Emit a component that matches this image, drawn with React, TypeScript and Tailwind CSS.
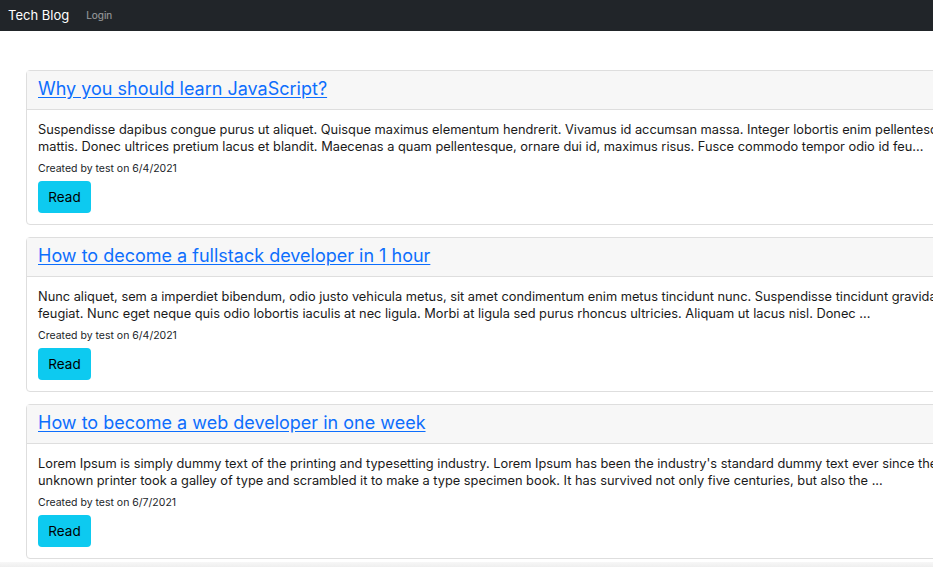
const posts = [
  {
    title: "Why you should learn JavaScript?",
    lines: [
      "Suspendisse dapibus congue purus ut aliquet. Quisque maximus elementum hendrerit. Vivamus id accumsan massa. Integer lobortis enim pellentesque nibh",
      "mattis. Donec ultrices pretium lacus et blandit. Maecenas a quam pellentesque, ornare dui id, maximus risus. Fusce commodo tempor odio id feu...",
    ],
    date: "6/4/2021",
  },
  {
    title: "How to decome a fullstack developer in 1 hour",
    lines: [
      "Nunc aliquet, sem a imperdiet bibendum, odio justo vehicula metus, sit amet condimentum enim metus tincidunt nunc. Suspendisse tincidunt gravida",
      "feugiat. Nunc eget neque quis odio lobortis iaculis at nec ligula. Morbi at ligula sed purus rhoncus ultricies. Aliquam ut lacus nisl. Donec ...",
    ],
    date: "6/4/2021",
  },
  {
    title: "How to become a web developer in one week",
    lines: [
      "Lorem Ipsum is simply dummy text of the printing and typesetting industry. Lorem Ipsum has been the industry's standard dummy text ever since the",
      "unknown printer took a galley of type and scrambled it to make a type specimen book. It has survived not only five centuries, but also the ...",
    ],
    date: "6/7/2021",
  },
];

function PostCard({ title, lines, date }: { title: string; lines: string[]; date: string }) {
  return (
    <div className="border border-[#dedede] rounded-[4px] bg-white">
      <div className="h-[39px] bg-[#f7f7f7] border-b border-[#dedede] px-[11px] flex items-center">
        <a href="#" className="-mt-[3px] text-[18px] leading-none text-[#0d6efd] underline underline-offset-2 whitespace-nowrap">
          {title}
        </a>
      </div>
      <div className="px-[11px] pt-[11px] pb-[11px]">
        <p className="text-[12.8px] leading-[17px] text-[#1a1a1a] whitespace-nowrap">
          {lines[0]}
          <br />
          {lines[1]}
        </p>
        <p className="mt-[6px] text-[10.5px] leading-[15px] text-[#212529]">Created by test on {date}</p>
        <button className="mt-[5px] h-[32px] w-[53px] rounded-[4px] bg-[#0dcaf0] text-[13.5px] text-black">
          Read
        </button>
      </div>
    </div>
  );
}

export default function App() {
  return (
    <div className="w-[933px] h-[567px] overflow-hidden bg-white font-['Inter','Liberation_Sans',sans-serif] relative">
      <nav className="h-[31px] bg-[#212529] flex items-center px-[8px] gap-[17px]">
        <span className="text-[13px] text-white">Tech Blog</span>
        <a href="#" className="text-[10px] text-white/55">Login</a>
      </nav>
      <main className="pt-[39px] pl-[26px]">
        <div className="w-[1100px] flex flex-col gap-[12px]">
          {posts.map((p) => (
            <PostCard key={p.title} {...p} />
          ))}
        </div>
      </main>
      <div className="absolute left-0 right-0 bottom-0 h-[5px] bg-gradient-to-b from-[#f7f7f7] to-[#efefef]" />
    </div>
  );
}
